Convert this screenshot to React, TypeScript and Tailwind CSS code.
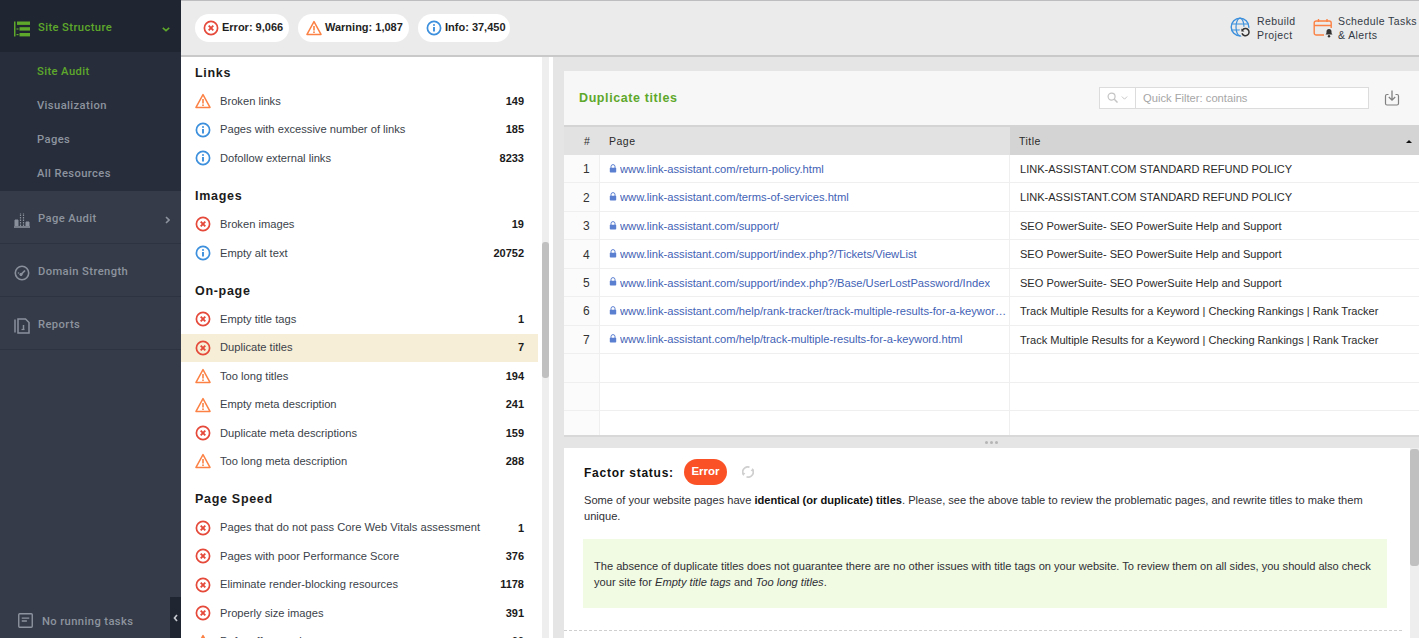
import type { ReactNode } from 'react';

const arial = "font-['Liberation_Sans',Arial,sans-serif]";
const din = "font-['Roboto','Liberation_Sans',sans-serif]";

type Level = 'error' | 'warn' | 'info';

function ErrorIcon({ className = 'w-[16px] h-[16px]' }: { className?: string }) {
  return (
    <svg viewBox="0 0 16 16" className={className} fill="none">
      <circle cx="8" cy="8" r="6.6" stroke="#e5493a" strokeWidth="1.7" />
      <path d="M5.7 5.7l4.6 4.6M10.3 5.7l-4.6 4.6" stroke="#e5493a" strokeWidth="1.9" />
    </svg>
  );
}

function WarnIcon({ className = 'w-[16px] h-[16px]' }: { className?: string }) {
  return (
    <svg viewBox="0 0 16 16" className={className} fill="none">
      <path d="M8 1.6L15 14.4H1z" stroke="#fb8144" strokeWidth="1.5" strokeLinejoin="round" />
      <path d="M8 6v4.4" stroke="#fb8144" strokeWidth="1.6" />
      <circle cx="8" cy="12.2" r="0.9" fill="#fb8144" />
    </svg>
  );
}

function InfoIcon({ className = 'w-[16px] h-[16px]' }: { className?: string }) {
  return (
    <svg viewBox="0 0 16 16" className={className} fill="none">
      <circle cx="8" cy="8" r="6.6" stroke="#3b8fdc" strokeWidth="1.7" />
      <path d="M8 7v4.6" stroke="#3b8fdc" strokeWidth="1.9" />
      <circle cx="8" cy="4.9" r="1" fill="#3b8fdc" />
    </svg>
  );
}

function LevelIcon({ level }: { level: Level }) {
  if (level === 'error') return <ErrorIcon />;
  if (level === 'warn') return <WarnIcon />;
  return <InfoIcon />;
}

function LockIcon() {
  return (
    <svg viewBox="0 0 8 9" className="w-[8px] h-[9px] shrink-0 mb-[2px]" fill="none">
      <path d="M2 4V2.6a2 2 0 014 0V4" stroke="#5b7fd0" strokeWidth="1" />
      <rect x="0.8" y="3.8" width="6.4" height="4.8" rx="0.8" fill="#5b7fd0" />
    </svg>
  );
}

const sections: { title: string; rows: [Level, string, number][] }[] = [
  {
    title: 'Links',
    rows: [
      ['warn', 'Broken links', 149],
      ['info', 'Pages with excessive number of links', 185],
      ['info', 'Dofollow external links', 8233],
    ],
  },
  {
    title: 'Images',
    rows: [
      ['error', 'Broken images', 19],
      ['info', 'Empty alt text', 20752],
    ],
  },
  {
    title: 'On-page',
    rows: [
      ['error', 'Empty title tags', 1],
      ['error', 'Duplicate titles', 7],
      ['warn', 'Too long titles', 194],
      ['warn', 'Empty meta description', 241],
      ['error', 'Duplicate meta descriptions', 159],
      ['warn', 'Too long meta description', 288],
    ],
  },
  {
    title: 'Page Speed',
    rows: [
      ['error', 'Pages that do not pass Core Web Vitals assessment', 1],
      ['error', 'Pages with poor Performance Score', 376],
      ['error', 'Eliminate render-blocking resources', 1178],
      ['error', 'Properly size images', 391],
      ['warn', 'Defer offscreen images', 66],
    ],
  },
];

const tableRows = [
  ['www.link-assistant.com/return-policy.html', 'LINK-ASSISTANT.COM STANDARD REFUND POLICY'],
  ['www.link-assistant.com/terms-of-services.html', 'LINK-ASSISTANT.COM STANDARD REFUND POLICY'],
  ['www.link-assistant.com/support/', 'SEO PowerSuite- SEO PowerSuite Help and Support'],
  ['www.link-assistant.com/support/index.php?/Tickets/ViewList', 'SEO PowerSuite- SEO PowerSuite Help and Support'],
  ['www.link-assistant.com/support/index.php?/Base/UserLostPassword/Index', 'SEO PowerSuite- SEO PowerSuite Help and Support'],
  ['www.link-assistant.com/help/rank-tracker/track-multiple-results-for-a-keyword.html', 'Track Multiple Results for a Keyword | Checking Rankings | Rank Tracker'],
  ['www.link-assistant.com/help/track-multiple-results-for-a-keyword.html', 'Track Multiple Results for a Keyword | Checking Rankings | Rank Tracker'],
];

function NavRow({ icon, label, chevron, h }: { icon: ReactNode; label: string; chevron?: boolean; h: string }) {
  return (
    <div className={`flex items-center pl-[14px] pr-[11px] border-b border-[#2d3340] pt-[5px] ${h}`}>
      <span className="w-[24px] shrink-0 text-[#8a919d]">{icon}</span>
      <span className="text-[11.2px] font-medium tracking-[0.4px] text-[#8d949f]">{label}</span>
      {chevron && (
        <svg viewBox="0 0 5 8" className="ml-auto w-[5px] h-[8px]" fill="none">
          <path d="M1 1l3 3-3 3" stroke="#8d949f" strokeWidth="1.6" />
        </svg>
      )}
    </div>
  );
}

function Pill({ icon, label, w }: { icon: ReactNode; label: string; w: string }) {
  return (
    <div className={`h-[28px] rounded-full bg-white flex items-center gap-[3px] pl-[8px] text-[11px] font-bold whitespace-nowrap text-[#1f1f1f] ${w}`}>
      {icon}
      <span>{label}</span>
    </div>
  );
}

export default function App() {
  return (
    <div className={`relative flex h-[638px] w-[1419px] overflow-hidden bg-white ${arial}`}>
      {/* Sidebar */}
      <aside className={`relative w-[181px] shrink-0 flex flex-col bg-[#353b48] ${din}`}>
        <div className="h-[52px] bg-[#1f2531] flex items-center pl-[14px] pr-[11px] pt-[5px]">
          <svg viewBox="0 0 16 16" className="w-[16px] h-[16px] mr-[8px] shrink-0" fill="#5ea82b">
            <rect x="0" y="0.5" width="1.5" height="15" />
            <rect x="3" y="0.5" width="13" height="3.4" />
            <rect x="5.5" y="6.2" width="10.5" height="3.4" />
            <rect x="5.5" y="12" width="10.5" height="3.4" />
            <rect x="2.5" y="7.4" width="2" height="1.2" />
            <rect x="2.5" y="13" width="2" height="1.2" />
          </svg>
          <span className="text-[11.2px] font-medium tracking-[0.4px] text-[#5ea82b]">Site Structure</span>
          <svg viewBox="0 0 10 6" className="ml-auto w-[8px] h-[5px] mt-[2px]" fill="none">
            <path d="M1 1l4 3.4L9 1" stroke="#5ea82b" strokeWidth="2" />
          </svg>
        </div>
        <div className="h-[139px] bg-[#272d3b] flex flex-col pl-[37px] pt-[3px] text-[11.2px] font-medium tracking-[0.4px] text-[#8d949f]">
          <div className="h-[34px] flex items-center text-[#5ea82b]">Site Audit</div>
          <div className="h-[34px] flex items-center">Visualization</div>
          <div className="h-[34px] flex items-center">Pages</div>
          <div className="h-[34px] flex items-center">All Resources</div>
        </div>
        <NavRow
          h="h-[53px]"
          chevron
          label="Page Audit"
          icon={
            <svg viewBox="0 0 16 16" className="w-[16px] h-[16px]" fill="none" stroke="currentColor">
              <path d="M0 15h16" strokeWidth="1.6" />
              <path d="M1 14V8h3v6" fill="currentColor" />
              <path d="M6.5 14V1M9.5 14V1" strokeWidth="1.2" strokeDasharray="1.5 1" />
              <path d="M12 14v-4h3v4" fill="currentColor" />
            </svg>
          }
        />
        <NavRow
          h="h-[53px]"
          label="Domain Strength"
          icon={
            <svg viewBox="0 0 16 16" className="w-[16px] h-[16px]" fill="none" stroke="currentColor">
              <circle cx="8" cy="8" r="6.7" strokeWidth="1.6" />
              <path d="M7 9.5l4-4" strokeWidth="1.7" />
              <circle cx="7" cy="9.5" r="1.2" fill="currentColor" />
              <path d="M3.8 8h1.4" strokeWidth="1.2" />
            </svg>
          }
        />
        <NavRow
          h="h-[53px]"
          label="Reports"
          icon={
            <svg viewBox="0 0 16 16" className="w-[16px] h-[16px]" fill="none" stroke="currentColor">
              <path d="M1 1.5v13" strokeWidth="1.5" />
              <path d="M4 1h7.5L15 4.5V15H4z" strokeWidth="1.5" />
              <path d="M9.5 11V7" strokeWidth="1.5" />
              <path d="M7.5 11.5h3" strokeWidth="1.2" />
            </svg>
          }
        />
        <div className="mt-auto h-[34px] flex items-center pl-[18px] pt-[1px]">
          <svg viewBox="0 0 16 16" className="w-[15px] h-[15px] mr-[9px] mb-[2px]" fill="none" stroke="#8d949f">
            <rect x="0.8" y="0.8" width="14.4" height="14.4" rx="1" strokeWidth="1.5" />
            <path d="M4 5.5h8M4 8.5h5.5" strokeWidth="1.5" />
          </svg>
          <span className="text-[11.2px] font-medium tracking-[0.4px] text-[#8d949f] mt-[2px]">No running tasks</span>
        </div>
        <div className="absolute right-0 bottom-0 h-[41px] w-[11px] bg-[#1f2531] flex items-center justify-center">
          <svg viewBox="0 0 5 8" className="w-[5px] h-[8px]" fill="none">
            <path d="M4 1L1.5 4 4 7" stroke="#c5c8ce" strokeWidth="1.7" />
          </svg>
        </div>
      </aside>

      <div className="flex-1 min-w-0 flex flex-col">
        {/* Top bar */}
        <header className="h-[57px] shrink-0 bg-[#ebebeb] border-t border-[#bdbdc0] border-b-2 border-b-[#c9c9c9] flex items-center pl-[14px] pr-[4px] pb-[1px] gap-[9px]">
          <Pill w="w-[94px]" icon={<ErrorIcon />} label="Error: 9,066" />
          <Pill w="w-[111px]" icon={<WarnIcon />} label="Warning: 1,087" />
          <Pill w="w-[92px]" icon={<InfoIcon />} label="Info: 37,450" />
          <div className="ml-auto flex items-center text-[10.5px] leading-[14px] tracking-[0.4px] whitespace-nowrap text-[#333a45]">
            <svg viewBox="0 0 21 21" className="w-[21px] h-[21px] mr-[6px]" fill="none">
              <circle cx="10" cy="10" r="8.8" stroke="#3b8fdc" strokeWidth="1.4" />
              <ellipse cx="10" cy="10" rx="4" ry="8.8" stroke="#3b8fdc" strokeWidth="1.2" />
              <path d="M1.5 7h17M1.5 13h17" stroke="#3b8fdc" strokeWidth="1.2" />
              <circle cx="15" cy="15" r="5.6" fill="#ebebeb" />
              <path d="M12.4 13.2a3.6 3.6 0 11-.4 3" stroke="#333" strokeWidth="1.5" />
              <path d="M11.4 11.6v3h3z" fill="#333" />
            </svg>
            <div className="w-[56px]">
              <div>Rebuild</div>
              <div>Project</div>
            </div>
            <svg viewBox="0 0 20 20" className="w-[20px] h-[20px] mr-[5px]" fill="none">
              <path d="M11 17H3.5A2 2 0 011.2 15V5a2 2 0 012-2h13a2 2 0 012 2v5" stroke="#fb8144" strokeWidth="1.4" />
              <path d="M1.2 7.5h17M5.5 1v3M14 1v3" stroke="#fb8144" strokeWidth="1.4" />
              <path d="M12.5 16.5c1-.8 1-1.8 1-3a2.4 2.4 0 015 0c0 1.2 0 2.2 1 3z" fill="#333" />
              <circle cx="16" cy="18.2" r="1.2" fill="#333" />
            </svg>
            <div className="w-[77px]">
              <div>Schedule Tasks</div>
              <div>&amp; Alerts</div>
            </div>
          </div>
        </header>

        <div className="flex-1 min-h-0 flex">
          {/* Audit list */}
          <div className="w-[361px] shrink-0 flex overflow-hidden">
            <div className="w-[357px] shrink-0 pt-[2px]">
              {sections.map((section, i) => (
                <div key={section.title} className={i === 0 ? '' : 'mt-[10px]'}>
                  <h2 className="h-[28px] flex items-center pl-[14px] text-[12.5px] font-bold tracking-[0.7px] text-[#1b1b1b]">
                    {section.title}
                  </h2>
                  {section.rows.map(([level, label, count]) => (
                    <div
                      key={label}
                      className={`h-[28.43px] flex items-center pl-[14px] pr-[14px] text-[11.17px] text-[#3b3f4a] ${
                        label === 'Duplicate titles' ? 'bg-[#f6eed6]' : ''
                      }`}
                    >
                      <span className="w-[25px] shrink-0 flex">
                        <LevelIcon level={level} />
                      </span>
                      <span>{label}</span>
                      <span className="ml-auto text-[11px] font-bold text-[#1b1b1b]">{count}</span>
                    </div>
                  ))}
                </div>
              ))}
            </div>
            <div className="w-[4px] shrink-0" />
          </div>
          <div className="w-[7px] shrink-0 bg-[#eeeeee] pt-[185px]">
            <div className="h-[136px] w-full rounded-[3px] bg-[#c0c0c0]" />
          </div>
          <div className="w-[4px] shrink-0" />

          {/* Right side */}
          <div className="flex-1 min-w-0 flex flex-col bg-[#e5e5e5] pl-[11px] pt-[14px]">
            <div className="h-[54px] shrink-0 bg-[#f7f7f7] flex items-center pl-[15px] pr-[19px]">
              <h1 className="text-[12.5px] font-bold tracking-[0.6px] text-[#5ea82b]">Duplicate titles</h1>
              <div className="ml-auto flex h-[22px] w-[270px] border border-[#dcdcdc] bg-white mb-[1px]">
                <div className="w-[36px] border-r border-[#dcdcdc] flex items-center justify-center gap-[3px]">
                  <svg viewBox="0 0 12 12" className="w-[11px] h-[11px]" fill="none" stroke="#c4c4c4">
                    <circle cx="5" cy="5" r="3.8" strokeWidth="1.3" />
                    <path d="M8 8l3.5 3.5" strokeWidth="1.6" />
                  </svg>
                  <svg viewBox="0 0 8 5" className="w-[7px] h-[4px]" fill="none" stroke="#c4c4c4">
                    <path d="M0.7 0.7L4 4l3.3-3.3" strokeWidth="1.2" />
                  </svg>
                </div>
                <span className="pl-[7px] text-[11.2px] leading-[21px] text-[#a6a6a6]">Quick Filter: contains</span>
              </div>
              <svg viewBox="0 0 16 16" className="ml-[15px] w-[16px] h-[16px]" fill="none" stroke="#808080">
                <path d="M4.5 4.5H3a1.5 1.5 0 00-1.5 1.5v7.5A1.5 1.5 0 003 15h10a1.5 1.5 0 001.5-1.5V6A1.5 1.5 0 0013 4.5h-1.5" strokeWidth="1.2" />
                <path d="M8 0.5V10M4.8 7L8 10.2 11.2 7" strokeWidth="1.3" />
              </svg>
            </div>

            {/* Table */}
            <div className="h-[312px] shrink-0 bg-white flex flex-col border-b-2 border-[#d8d8d8] overflow-hidden">
              <div className="h-[30px] shrink-0 flex bg-[#e2e2e2] border-t-2 border-[#d4d4d4] text-[10.5px] tracking-[0.5px] text-[#2a2a2a] leading-[28px]">
                <div className="w-[36px] pl-[20px]">#</div>
                <div className="w-[410px] pl-[9px]">Page</div>
                <div className="flex-1 pl-[9px] bg-[#d4d4d4] flex items-center justify-between pr-[7px]">
                  <span>Title</span>
                  <span className="w-0 h-0 border-x-[3px] border-x-transparent border-b-[3px] border-b-[#111]" />
                </div>
              </div>
              {tableRows.map(([page, title], i) => (
                <div key={page} className="h-[28.45px] shrink-0 flex items-center border-b border-[#efefef] text-[12px]">
                  <div className="w-[36px] h-full bg-[#fbfbfb] border-r border-[#efefef] flex items-center pl-[19px] pt-[1px] text-[#333]">
                    {i + 1}
                  </div>
                  <div className="w-[410px] h-full flex items-center pl-[9px] gap-[3px] border-r border-[#efefef] pt-[1px]">
                    <LockIcon />
                    <span className="truncate text-[#3f62b5] text-[11.2px]">{page}</span>
                  </div>
                  <div className="flex-1 pl-[10px] pt-[1px] truncate text-[#2b2b2b] text-[11.05px]">{title}</div>
                </div>
              ))}
              {[0, 1, 2].map((n) => (
                <div key={n} className="h-[28.45px] shrink-0 flex border-b border-[#efefef]">
                  <div className="w-[36px] h-full bg-[#fbfbfb] border-r border-[#efefef]" />
                  <div className="w-[410px] h-full border-r border-[#efefef]" />
                </div>
              ))}
            </div>

            <div className="h-[11px] shrink-0 flex items-center justify-center gap-[2px]">
              <span className="w-[3px] h-[3px] rounded-full bg-[#b5b5b5]" />
              <span className="w-[3px] h-[3px] rounded-full bg-[#b5b5b5]" />
              <span className="w-[3px] h-[3px] rounded-full bg-[#b5b5b5]" />
            </div>

            {/* Factor status */}
            <div className="flex-1 min-h-0 bg-white flex">
              <div className="flex-1 min-w-0 pl-[20px] pr-[23px] pt-[11px] flex flex-col">
                <div className="flex items-center h-[26px]">
                  <span className="text-[12px] font-bold tracking-[0.75px] text-[#111] w-[100px] pt-[1px]">Factor status:</span>
                  <span className="h-[26px] w-[43px] rounded-[13px] bg-[#fb5126] text-white text-[11.5px] font-bold flex items-center justify-center">
                    Error
                  </span>
                  <svg viewBox="0 0 12 12" className="ml-[15px] w-[12px] h-[12px]" fill="none" stroke="#cfcfcf">
                    <path d="M7.5 1.2A5 5 0 001.5 8.5" strokeWidth="1.7" />
                    <path d="M0 6.8l3.4.3L1.2 10z" fill="#cfcfcf" stroke="none" />
                    <path d="M4.5 10.8A5 5 0 0010.5 3.5" strokeWidth="1.7" />
                    <path d="M12 5.2l-3.4-.3L10.8 2z" fill="#cfcfcf" stroke="none" />
                  </svg>
                </div>
                <p className="mt-[7px] text-[11.12px] leading-[16px] text-[#2f2f35] w-[790px]">
                  Some of your website pages have <b className="text-[#111]">identical (or duplicate) titles</b>. Please, see the above table to review the problematic pages, and rewrite titles to make them unique.
                </p>
                <div className="mt-[15px] -ml-[1px] h-[69px] bg-[#f1fae3] flex items-center pl-[11px] pr-[12px] text-[11.1px] leading-[16px] text-[#2f2f35]">
                  <p>
                    The absence of duplicate titles does not guarantee there are no other issues with title tags on your website. To review them on all sides, you should also check your site for <i>Empty title tags</i> and <i>Too long titles</i>.
                  </p>
                </div>
                <div className="mt-[22px] -ml-[20px] -mr-[15px] border-t border-dashed border-[#cfcfcf]" />
              </div>
              <div className="w-[9px] shrink-0 bg-[#eeeeee] pt-[1px]">
                <div className="h-[117px] rounded-[3px] bg-[#c0c0c0]" />
              </div>
            </div>
          </div>
        </div>
      </div>
    </div>
  );
}
